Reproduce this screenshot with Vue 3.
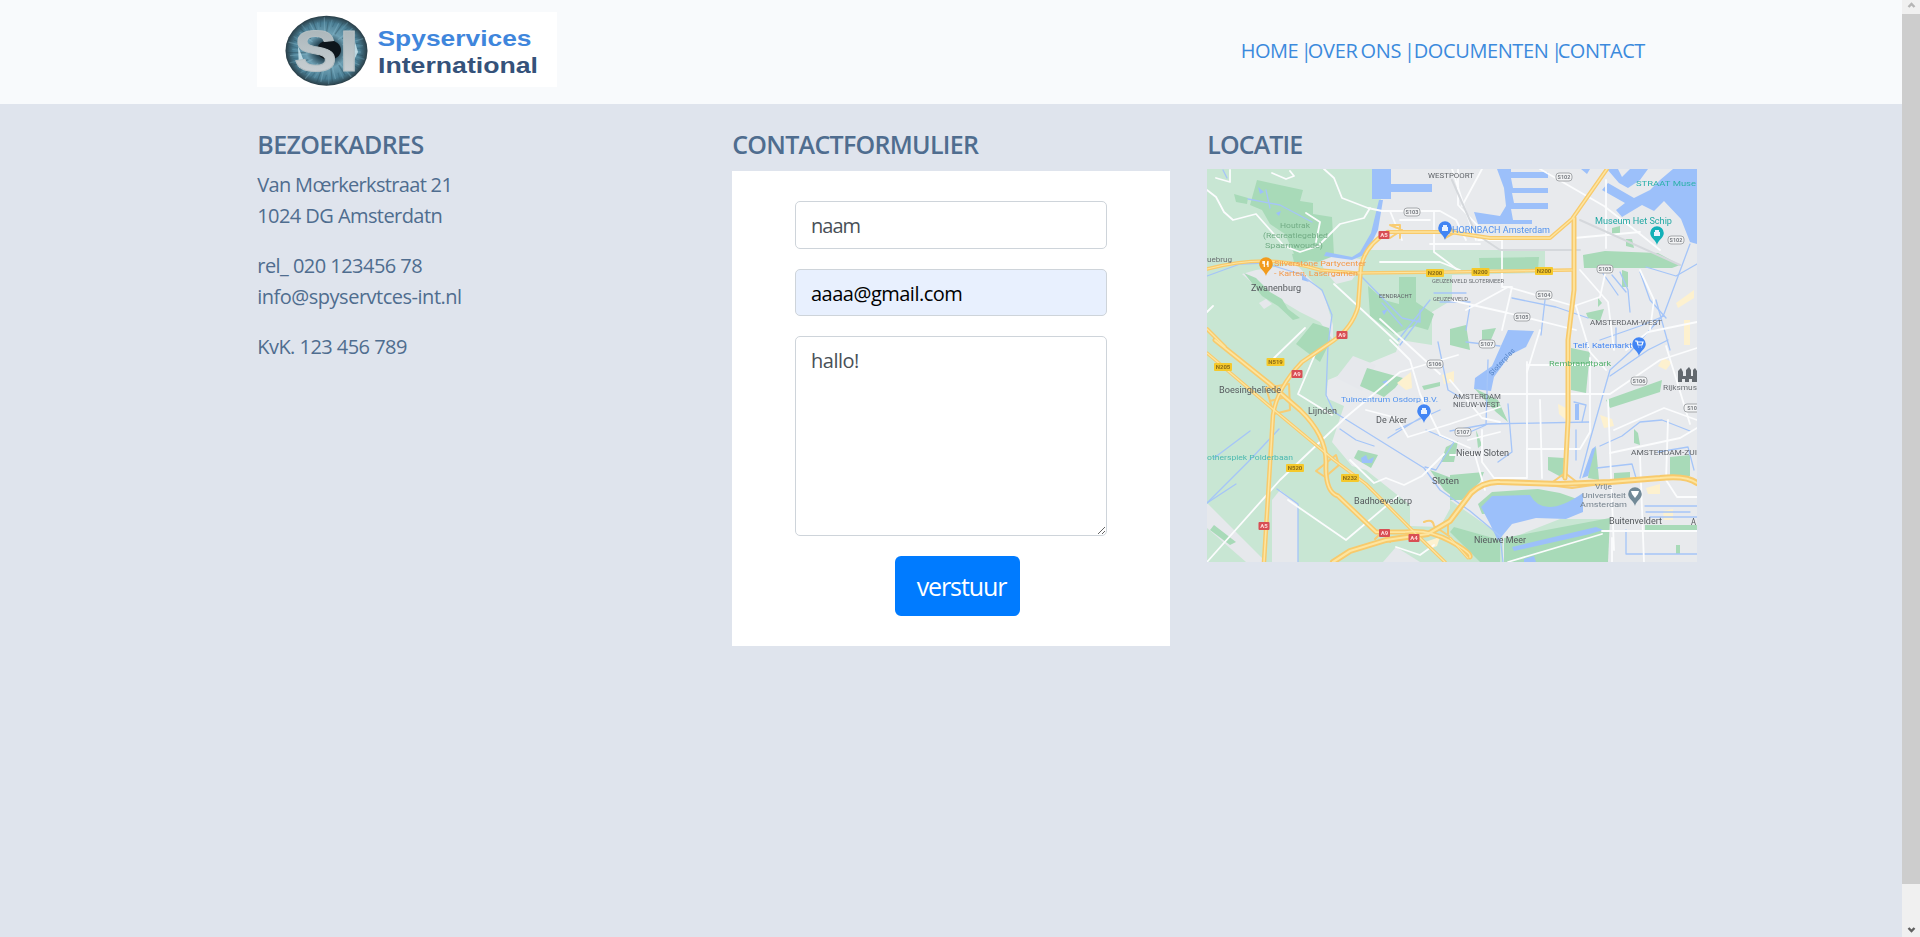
<script setup>
import { ref } from 'vue'

const naam = ref('naam')
const email = ref('aaaa@gmail.com')
const bericht = ref('hallo!')

const nav = [
  { label: 'HOME |', cls: 'n1' },
  { label: 'OVER ONS |', cls: 'n2' },
  { label: 'DOCUMENTEN |', cls: 'n3' },
  { label: 'CONTACT', cls: 'n4' },
]

const irisRays = Array.from({ length: 60 }, (_, i) => {
  const a = (i * Math.PI) / 30
  const inner = 0.42 + (i % 4) * 0.09
  const outer = 0.84 + (i % 3) * 0.06
  return {
    x1: 69.5 + Math.cos(a) * 41 * inner,
    y1: 38.7 + Math.sin(a) * 35 * inner,
    x2: 69.5 + Math.cos(a + 0.05) * 41 * outer,
    y2: 38.7 + Math.sin(a + 0.05) * 35 * outer,
    c: ['#8fc0d2', '#31596b', '#6fa5ba', '#24424f'][(i * 7) % 4],
  }
})

const light = [
  'M1207 169H1372L1374 199H1381L1372 236L1362 250H1545V273L1452 275V300L1432 312V345L1400 340L1396 352L1328 380L1326 398L1344 406L1338 424L1332 442L1352 466L1366 470L1410 505V526L1440 527L1452 505L1498 538L1500 562H1207Z',
  'M1504 541L1560 519H1608V562H1504Z',
  'M1450 500L1503 537V562H1450Z',
]
const grey = [
  'M1256 270L1296 264L1324 294L1333 325V340L1320 322L1300 312L1280 300L1260 290L1242 274Z',
  'M1259 303L1266 299L1272 304L1264 309Z',
  'M1318 252L1366 260L1352 280L1336 284L1324 270Z',
  'M1353 356L1376 365L1362 391L1336 378Z',
  'M1272 562V500L1280 490L1298 504V562Z',
  'M1207 503L1266 562H1246L1207 528Z',
  'M1383 562L1396 547L1420 562Z',
]
const dark = [
  'M1257 180L1303 190L1300 201L1313 203V214L1332 217L1334 256L1318 262L1296 258L1285 234L1270 224L1262 210L1250 205Z',
  'M1234 194L1248 198L1247 204L1236 202Z',
  'M1292 254L1308 251L1315 257L1306 262H1294Z',
  'M1368 286L1384 300L1399 304V277H1416V302L1434 314L1428 330L1414 326L1394 334L1370 316Z',
  'M1244 273L1256 278L1270 292L1282 299L1288 309L1300 318L1293 320L1278 306L1262 296Z',
  'M1313 323L1329 328L1330 342L1320 362L1296 344Z',
  'M1367 368L1403 378L1395 388L1384 397L1360 386Z',
  'M1358 450L1378 455L1371 468L1354 458Z',
  'M1479 258L1539 257L1538 270L1480 269Z',
  'M1583 255L1605 251L1658 253L1680 265L1672 268H1584Z',
  'M1612 228L1620 226V234H1612ZM1626 239H1632L1634 248L1626 246Z',
  'M1450 329L1466 325L1470 350L1450 345ZM1482 330L1496 328L1490 342H1482Z',
  'M1586 313L1604 309L1600 321L1588 318ZM1622 270L1628 272V287H1622ZM1598 298L1602 303L1598 307Z',
  'M1571 348L1590 352L1586 393L1571 390Z',
  'M1606 400L1662 380L1660 392L1610 408Z',
  'M1548 457L1564 458L1563 478L1548 470Z',
  'M1590 455L1596 447L1599 480L1588 478ZM1614 473L1630 472V479H1614Z',
  'M1670 457L1690 455V476H1670ZM1634 429L1638 433L1640 445L1634 443Z',
  'M1478 504L1492 492L1538 489L1560 493L1580 500L1578 510L1482 514Z',
  'M1450 475L1484 472L1480 482L1462 500H1450Z',
  'M1454 527L1500 540L1500 562H1480L1450 532Z',
  'M1504 538L1610 518L1608 562H1504Z',
  'M1446 447L1458 441L1454 462H1441ZM1430 470L1457 480L1452 496L1444 490Z',
  'M1645 525H1697V530H1645ZM1676 545H1680V554H1676Z',
  'M1214 525L1236 542L1230 545L1210 530Z',
  'M1474 388L1498 400L1508 422L1496 412ZM1476 430L1482 445L1478 448Z',
  'M1422 386L1440 382V386L1424 390Z',
]
const water = [
  'M1372 169H1391V184H1432V192H1391V199H1372Z',
  'M1497 169H1511V172H1548V178H1511L1513 188H1548V193H1512L1514 203H1548V209H1511L1513 220H1532V224H1478L1474 212L1500 216L1506 206L1504 188Z',
  'M1581 169H1590L1587 174ZM1607 169H1618L1622 177L1630 169H1648L1640 180L1628 188L1619 183Z',
  'M1602 190L1608 183L1634 198L1650 190L1660 180L1673 169H1697V244L1690 242L1681 219L1664 201L1654 211L1642 205L1622 217L1616 210L1625 203Z',
  'M1508 330L1534 331L1526 347L1510 355L1494 377L1491 391L1474 389L1475 378L1492 366Z',
  'M1481 507L1492 496L1530 495Q1544 520 1583 493V512L1566 519L1536 518L1512 524L1498 541L1490 524Z',
  'M1512 547L1596 527L1603 530L1590 534L1514 551Z',
  'M1360 252L1371 233L1379 200L1383 200L1378 230L1366 254L1352 260L1324 256L1326 252L1352 257Z',
  'M1592 449L1596 446L1588 476L1582 478ZM1575 404H1579V420H1575Z',
  'M1361 458L1366 455L1368 460L1374 457L1372 463L1362 463Z',
  'M1258 187L1264 192L1260 194ZM1276 213L1281 211L1279 216ZM1382 382L1387 380L1388 386ZM1382 311L1388 309L1384 315Z',
  'M1302 273L1309 282L1302 280ZM1524 559L1534 556L1536 562H1524Z',
]
const beige = [
  'M1397 383L1411 372L1412 388L1406 390Z',
  'M1442 375L1454 371V382L1444 384Z',
  'M1676 303L1694 290V298L1678 308ZM1684 320H1690V345H1684Z',
  'M1663 358L1672 362L1666 370L1658 366ZM1663 511L1673 509V520H1664Z',
  'M1425 542L1440 537L1437 546L1430 549ZM1646 488L1660 484V494H1648ZM1558 404L1566 408V420L1559 414Z',
  'M1600 415L1612 419L1614 426L1604 428Z',
]
const streams = [
  'M1207 276L1240 264L1264 263L1300 274L1322 290L1332 315L1328 345L1326 395L1334 412L1424 468L1440 490L1470 511L1500 536L1503 562',
  'M1248 199L1280 205L1312 222M1266 190L1270 208M1223 170L1227 178',
  'M1382 303L1402 326M1400 345L1420 318M1360 275L1402 318L1420 322V310',
  'M1690 244L1664 314L1630 352L1610 370L1590 440L1580 478',
  'M1620 272L1628 290L1630 312M1612 275L1626 292M1602 272L1618 295M1512 298L1556 307L1588 318M1545 300L1541 335',
  'M1610 376L1648 350L1668 340M1600 446L1622 436L1640 422L1662 420L1690 431',
  'M1450 431L1488 424L1590 422M1488 360L1486 425L1470 432',
  'M1574 402L1586 405L1582 422M1576 430V460M1597 468L1632 464L1636 478',
  'M1438 342L1448 390L1460 397M1426 430L1454 442L1436 470L1425 467M1340 429L1356 440L1374 446',
  'M1626 530V554H1697M1645 506H1697M1646 512H1690M1650 517H1697',
  'M1207 503L1248 462L1279 429M1277 489L1298 504V562',
  'M1508 404L1512 452L1498 462M1466 342L1500 346M1658 452L1688 447L1694 470M1640 272L1650 300L1666 318',
  'M1646 267L1676 276L1697 264M1656 300L1670 350M1600 340L1640 326L1664 316M1616 347V328',
  'M1207 503L1236 484M1214 458L1250 431M1388 438L1420 418M1396 430L1440 410',
  'M1470 306L1466 330M1434 293H1466M1440 302H1470M1430 300L1398 340',
]
const minor = [
  'M1324 169L1334 178L1342 198L1368 208L1382 211H1440L1456 220L1466 240',
  'M1207 190L1216 197L1224 212L1233 220L1256 214L1272 232L1284 246L1300 252L1318 246L1340 224L1364 218L1370 208',
  'M1290 171L1294 176L1286 179L1272 173M1230 170V182L1216 178M1306 213L1320 222L1316 242',
  'M1334 284L1398 343M1380 319L1440 374M1207 562L1280 480L1345 418L1400 372L1458 355',
  'M1305 328L1274 358M1316 352L1298 394L1332 415M1366 410L1397 418L1408 437L1450 424L1500 407',
  'M1390 340L1410 360L1420 394L1440 435L1470 448M1350 460L1374 483L1386 478L1404 485L1422 476L1444 454',
  'M1288 500L1346 540L1398 496M1396 547L1420 555L1434 545M1207 312L1213 306',
  'M1434 211V252L1450 264L1460 272M1502 240V287L1512 287L1502 330M1450 300L1508 313L1576 330',
  'M1466 310L1508 287L1574 306L1600 297L1606 270M1574 238L1640 232M1606 180V248',
  'M1500 394H1610L1660 360L1697 348M1527 362V478H1494L1482 462V430',
  'M1450 380L1482 418L1500 422M1527 449H1580L1590 432V358M1608 400L1614 550',
  'M1540 169L1604 206L1640 234L1660 250M1452 169L1464 206L1476 240',
  'M1458 169V205L1480 228M1482 169L1462 206M1502 240H1478M1430 244H1480M1430 220H1400',
  'M1580 270L1608 302L1614 350M1614 430L1664 408L1697 420M1610 453L1680 438L1697 428M1640 456L1644 562',
  'M1668 420L1666 480L1677 497H1697M1602 531H1697M1508 562L1602 534M1576 306L1590 352L1606 370',
  'M1666 346L1690 424M1640 270L1654 300L1650 330M1527 372L1540 330M1527 365H1600',
  'M1612 538V562M1626 350L1648 332L1697 322M1540 400L1542 478M1468 440L1500 432',
  'M1450 455H1475L1485 490M1380 262H1440L1460 270M1390 211L1402 240',
]
const majors = [
  { d: 'M1207 269Q1238 261 1264 261T1320 270L1356 273L1450 272L1572 270', w: 3.5 },
  { d: 'M1388 232H1450L1490 238H1550L1572 219L1607 169', w: 4 },
  { d: 'M1574 218V290L1568 340V420L1565 478', w: 5 },
  { d: 'M1388 232Q1365 245 1361 267L1358 307Q1352 328 1333 341L1302 362Q1277 388 1273 415L1264 562', w: 4.5 },
  { d: 'M1215 340L1270 384L1300 410Q1327 436 1326 464T1338 496L1376 532L1405 532Q1428 529 1450 541T1470 557', w: 5 },
  { d: 'M1207 353L1274 410L1334 460L1366 484L1415 533L1445 562', w: 3.4 },
  { d: 'M1333 562L1350 551L1386 540L1428 534L1450 521L1471 493Q1484 481 1500 482L1560 484L1610 482L1660 478Q1686 475 1697 483', w: 6 },
  { d: 'M1207 329L1225 347', w: 4 },
  { d: 'M1450 538L1468 558', w: 3 },
]
const loops = [
  'M1266 388L1289 384L1290 410L1274 414ZM1270 401L1286 397',
  'M1316 471L1336 455L1339 465L1325 477Z',
  'M1424 522Q1433 518 1434 526L1449 536M1448 534V522L1432 530M1550 484L1565 473L1582 486M1540 484L1572 488L1600 484',
  'M1390 225L1402 230L1390 238M1392 225H1400V238M1445 225L1456 232L1445 238',
  'M1375 539L1382 532L1390 542',
]
const badges = [
  { x: 1384, y: 235, t: 'A5', c: 'r' }, { x: 1342, y: 335, t: 'A9', c: 'r' },
  { x: 1297, y: 374, t: 'A9', c: 'r' }, { x: 1264, y: 526, t: 'A5', c: 'r' },
  { x: 1384.5, y: 533, t: 'A9', c: 'r' }, { x: 1414, y: 538, t: 'A4', c: 'r' },
  { x: 1435, y: 273, t: 'N200', c: 'y' }, { x: 1480.5, y: 272, t: 'N200', c: 'y' },
  { x: 1544, y: 271, t: 'N200', c: 'y' }, { x: 1223, y: 367, t: 'N205', c: 'y' },
  { x: 1275.5, y: 362, t: 'N519', c: 'y' }, { x: 1295, y: 468, t: 'N520', c: 'y' },
  { x: 1350, y: 478, t: 'N232', c: 'y' },
  { x: 1412, y: 212, t: 'S103', c: 'w' }, { x: 1564, y: 177, t: 'S102', c: 'w' },
  { x: 1676, y: 240, t: 'S102', c: 'w' }, { x: 1605, y: 269, t: 'S103', c: 'w' },
  { x: 1544, y: 295, t: 'S104', c: 'w' }, { x: 1522, y: 317, t: 'S105', c: 'w' },
  { x: 1487, y: 344, t: 'S107', c: 'w' }, { x: 1435, y: 364, t: 'S106', c: 'w' },
  { x: 1463, y: 432, t: 'S107', c: 'w' }, { x: 1639, y: 381, t: 'S106', c: 'w' },
  { x: 1692, y: 408, t: 'S10', c: 'w' },
]
const labels = [
  { x: 1428, y: 178, w: 46, s: 6.5, t: 'WESTPOORT', c: '#5f6368' },
  { x: 1636, y: 186, w: 60, s: 8, t: 'STRAAT Muse', c: '#2eb1ac' },
  { x: 1595, y: 224, w: 77, s: 8.5, t: 'Museum Het Schip', c: '#25a9a4' },
  { x: 1452, y: 233, w: 98, s: 9, t: 'HORNBACH Amsterdam', c: '#5292ee' },
  { x: 1280, y: 228, w: 30, s: 8, t: 'Houtrak', c: '#73ad86' },
  { x: 1263, y: 238, w: 65, s: 8, t: '(Recreatiegebied', c: '#73ad86' },
  { x: 1265, y: 248, w: 58, s: 8, t: 'Spaarnwoude)', c: '#73ad86' },
  { x: 1274, y: 266, w: 92, s: 8, t: 'Silverstone Partycenter', c: '#f49a4b' },
  { x: 1274, y: 276, w: 84, s: 8, t: '- Karten, Lasergamen', c: '#f49a4b' },
  { x: 1207, y: 262, w: 25, s: 8, t: 'uebrug', c: '#6a6e72' },
  { x: 1251, y: 291, w: 50, s: 8.5, t: 'Zwanenburg', c: '#55595d' },
  { x: 1379, y: 298, w: 33, s: 5, t: 'EENDRACHT', c: '#5f6368' },
  { x: 1432, y: 283, w: 72, s: 5, t: 'GEUZENVELD SLOTERMEER', c: '#6b6f74' },
  { x: 1433, y: 301, w: 35, s: 5, t: 'GEUZENVELD', c: '#6b6f74' },
  { x: 1590, y: 325, w: 72, s: 7, t: 'AMSTERDAM-WEST', c: '#5f6368' },
  { x: 1573, y: 348, w: 59, s: 8, t: 'Telf. Katemarkt', c: '#4285f4' },
  { x: 1549, y: 366, w: 62, s: 8, t: 'Rembrandtpark', c: '#54b06d' },
  { x: 1453, y: 399, w: 48, s: 7, t: 'AMSTERDAM', c: '#5f6368' },
  { x: 1453, y: 407, w: 47, s: 7, t: 'NIEUW-WEST', c: '#5f6368' },
  { x: 1663, y: 390, w: 34, s: 8, t: 'Rijksmus', c: '#6d7176' },
  { x: 1219, y: 393, w: 62, s: 8.5, t: 'Boesinghelïede', c: '#55595d' },
  { x: 1308, y: 414, w: 29, s: 8.5, t: 'Lijnden', c: '#55595d' },
  { x: 1341, y: 402, w: 97, s: 8, t: 'Tuincentrum Osdorp B.V.', c: '#5595f0' },
  { x: 1376, y: 423, w: 31, s: 8.5, t: 'De Aker', c: '#55595d' },
  { x: 1207, y: 460, w: 86, s: 8, t: 'otherspiek Polderbaan', c: '#4cb9b0' },
  { x: 1432, y: 484, w: 27, s: 8.5, t: 'Sloten', c: '#55595d' },
  { x: 1354, y: 504, w: 58, s: 8.5, t: 'Badhoevedorp', c: '#55595d' },
  { x: 1456, y: 456, w: 53, s: 8.5, t: 'Nieuw Sloten', c: '#55595d' },
  { x: 1474, y: 543, w: 52, s: 8.5, t: 'Nieuwe Meer', c: '#55595d' },
  { x: 1631, y: 455, w: 66, s: 7, t: 'AMSTERDAM-ZUI', c: '#5f6368' },
  { x: 1595, y: 489, w: 17, s: 8, t: 'Vrije', c: '#76838e' },
  { x: 1582, y: 498, w: 44, s: 8, t: 'Universiteit', c: '#76838e' },
  { x: 1580, y: 507, w: 47, s: 8, t: 'Amsterdam', c: '#76838e' },
  { x: 1609, y: 524, w: 53, s: 8.5, t: 'Buitenveldert', c: '#55595d' },
  { x: 1691, y: 525, w: 5, s: 8.5, t: 'A', c: '#55595d' },
]
const pins = [
  { x: 1266, y: 264, c: '#f29b1d' },
  { x: 1445, y: 228, c: '#4285f4' },
  { x: 1657, y: 233, c: '#12b0b8' },
  { x: 1639, y: 344, c: '#4285f4' },
  { x: 1424, y: 411, c: '#4285f4' },
  { x: 1635, y: 494, c: '#718997' },
]
</script>

<template>
  <div class="screen">
    <div class="page">
      <header class="top">
        <div class="container bar">
          <svg class="logo" viewBox="0 0 300 75">
            <defs>
              <radialGradient id="iris">
                <stop offset="0" stop-color="#101c24" />
                <stop offset=".28" stop-color="#2c4c5b" />
                <stop offset=".5" stop-color="#6d9fb3" />
                <stop offset=".8" stop-color="#4b7f95" />
                <stop offset="1" stop-color="#283c45" />
              </radialGradient>
              <linearGradient id="silver" x1="0" y1="0" x2="0" y2="1">
                <stop offset="0" stop-color="#a3b0b5" />
                <stop offset="1" stop-color="#cfd5d8" />
              </linearGradient>
            </defs>
            <rect width="300" height="75" fill="#fff" />
            <g class="eye">
              <ellipse cx="69.5" cy="38.7" rx="41" ry="35" fill="url(#iris)" />
              <line v-for="(r, i) in irisRays" :key="i" :x1="r.x1" :y1="r.y1" :x2="r.x2" :y2="r.y2" :stroke="r.c" stroke-width="1.2" opacity=".35" />
              <path d="M41 34L48 52L42 56ZM98 30L101 40L96 50Z" fill="#d6edf5" opacity=".8" />
              <ellipse cx="72" cy="38" rx="12" ry="10" fill="#0d151b" />
              <text class="mono" x="37" y="59" textLength="43" lengthAdjust="spacingAndGlyphs" fill="url(#silver)">S</text>
              <text class="mono" x="82" y="59" textLength="20" lengthAdjust="spacingAndGlyphs" fill="url(#silver)">I</text>
            </g>
            <text class="brand" x="120.5" y="34" textLength="154" lengthAdjust="spacingAndGlyphs" fill="#3f86dc">Spyservices</text>
            <text class="brand" x="121" y="61" textLength="160" lengthAdjust="spacingAndGlyphs" fill="#35527a">International</text>
          </svg>
          <nav>
            <a v-for="n in nav" :key="n.label" :class="n.cls">{{ n.label }}</a>
          </nav>
        </div>
      </header>

      <main class="container cols">
        <section>
          <h2 class="h-a">BEZOEKADRES</h2>
          <p><span class="l1">Van Mœrkerkstraat 21</span><br /><span class="l2">1024 DG Amsterdatn</span></p>
          <p><span class="l3">rel_ 020 123456 78</span><br /><span class="l4">info@spyservtces-int.nl</span></p>
          <p><span class="l5">KvK. 123 456 789</span></p>
        </section>
        <section>
          <h2 class="h-b">CONTACTFORMULIER</h2>
          <form @submit.prevent>
            <input v-model="naam" class="field name" type="text" />
            <input v-model="email" class="field filled" type="text" />
            <textarea v-model="bericht" class="field area"></textarea>
            <button type="submit">verstuur</button>
          </form>
        </section>
        <section>
          <h2 class="h-c">LOCATIE</h2>
          <svg class="map" viewBox="1207 169 490 393">
            <rect x="1207" y="169" width="490" height="393" fill="#e8eaed" />
            <g class="soft">
              <path v-for="d in light" :key="d" :d="d" fill="#c8e6d3" />
              <path v-for="d in grey" :key="d" :d="d" fill="#e6e8ec" />
              <path v-for="d in dark" :key="d" :d="d" fill="#a8dab8" />
              <path v-for="d in beige" :key="d" :d="d" fill="#fdf1cf" />
              <path v-for="d in water" :key="d" :d="d" fill="#9cc0fa" />
              <path v-for="d in streams" :key="d" :d="d" class="line" stroke="#a5c5f8" stroke-width="1.3" />
              <path v-for="d in minor" :key="d" :d="d" class="line" stroke="#fbfcfd" stroke-width="1.8" />
              <path d="M1452 180L1476 234L1500 250H1580M1580 220L1680 265" class="line" stroke="#d5d8dc" stroke-width="2" />
              <path v-for="d in loops" :key="d" :d="d" class="line" stroke="#f8cc73" stroke-width="2" />
              <path v-for="m in majors" :key="m.d" :d="m.d" class="line" stroke="#f8ca6c" :stroke-width="m.w" />
              <path v-for="m in majors" :key="'c' + m.d" :d="m.d" class="line" stroke="#fde5a0" :stroke-width="m.w * 0.35" />
              <g v-for="(b, i) in badges" :key="i" :class="['badge', b.c]">
                <rect :x="b.x - (b.c === 'y' ? 9 : b.c === 'w' ? 8 : 5.5)" :y="b.y - 4" :width="b.c === 'y' ? 18 : b.c === 'w' ? 16 : 11" height="8" :rx="b.c === 'w' ? 3 : 1" />
                <text :x="b.x" :y="b.y + 2.3" text-anchor="middle">{{ b.t }}</text>
              </g>
              <text v-for="(l, i) in labels" :key="i" class="label" :x="l.x" :y="l.y" :font-size="l.s" :textLength="l.w" lengthAdjust="spacingAndGlyphs" :fill="l.c">{{ l.t }}</text>
              <text class="label" x="1492" y="376" font-size="7" fill="#4f7fc0" transform="rotate(-47 1492 376)" textLength="34">Sloterplas</text>
              <path d="M1678 382V371L1681 368L1683 372V376H1686V370L1689 367L1691 370V376H1693V370L1695 368L1697 371V382H1692V379H1689V382H1685V379H1682V382Z" fill="#62686e" />
              <g v-for="p in pins" :key="p.x" :transform="`translate(${p.x} ${p.y})`">
                <path d="M0 12C-1 7-6.8 5-6.8 0A6.8 6.8 0 0 1 6.8 0C6.8 5 1 7 0 12Z" :fill="p.c" />
                <path v-if="p.x === 1639" d="M-4-3H-2L-1 1H3L4-2H-2M-.5 3h.6M2 3h.6" fill="none" stroke="#fff" stroke-width="1.2" />
                <path v-else-if="p.x === 1266" d="M-3-3V0M-1.7-3V3M2-3V3M2-3L1 1" fill="none" stroke="#fff" stroke-width="1.2" />
                <path v-else-if="p.x === 1635" d="M-4-3H4L3 0L0 4L-3 0Z" fill="#fff" />
                <path v-else d="M-3-1H-2V-3H2V-1H3V3H-3Z" fill="#e9f2ff" />
              </g>
            </g>
          </svg>
        </section>
      </main>
    </div>

    <aside class="scroll">
      <svg class="arrow up" viewBox="0 0 18 14"><path d="M6.5 7L9.5 4L12.5 7" /></svg>
      <div class="thumb"></div>
      <svg class="arrow down" viewBox="0 0 18 14"><path d="M6.5 5L9.5 8L12.5 5" /></svg>
    </aside>
  </div>
</template>

<style>
html, body { margin: 0; overflow: hidden; }
</style>

<style scoped>
* { box-sizing: border-box; }
.screen { display: flex; width: 1920px; height: 937px; overflow: hidden; font-family: "Open Sans", "Noto Sans", sans-serif; font-size: 20px; color: #4f6d8f; }
.page { width: 1902px; background: #dfe4ed; }
.container { width: 1425px; margin: 0 auto; padding: 0 18.75px; }
.top { height: 104px; background: #f8fafc; }
.bar { display: flex; justify-content: space-between; align-items: flex-start; padding-top: 12px; }
.logo { display: block; width: 300px; height: 75px; }
.eye { filter: blur(.5px); }
.mono { font: bold 58px "Liberation Sans", sans-serif; stroke: #b4bfc3; stroke-width: 1; }
.brand { font: bold 22px "Liberation Sans", sans-serif; }
nav { display: flex; margin: 24px -1px 0 0; width: 405px; line-height: 30px; color: #3c8add; white-space: nowrap; word-spacing: -2px; }
nav a { flex: none; white-space: pre; }
.n1 { width: 67px; letter-spacing: -.5px; }
.n2 { width: 106px; letter-spacing: -.3px; }
.n3 { width: 144px; letter-spacing: -.4px; }
.n4 { width: 88px; letter-spacing: -.5px; }
.cols { display: grid; grid-template-columns: repeat(3, 437.5px); column-gap: 37.5px; padding-top: 25px; }
section { min-width: 0; }
h2 { margin: 0 0 10px; font-size: 25px; font-weight: 600; line-height: 30px; white-space: nowrap; }
.h-a { letter-spacing: -.6px; }
.h-b { letter-spacing: -.72px; }
.h-c { letter-spacing: -.9px; }
p { margin: 0 0 19px; line-height: 31px; white-space: nowrap; }
.l1 { letter-spacing: -.67px; }
.l2 { letter-spacing: -.57px; }
.l3, .l5 { letter-spacing: -.54px; }
.l4 { letter-spacing: -.49px; }
form { display: flex; flex-direction: column; align-items: center; gap: 20px; margin-top: 12px; height: 475px; padding-top: 30px; background: #fff; }
.field { display: block; width: 312px; height: 47.5px; margin: 0; padding: 2px 15px 0; border: 1px solid #ced4da; border-radius: 5px; background: #fff; font: inherit; letter-spacing: -.5px; color: #495057; outline: 0; }
.name { letter-spacing: -1px; }
.filled { background: #e8f0fe; color: #000; }
.area { height: 200px; padding: 9px 15px; line-height: 30px; resize: both; }
button { width: 125px; height: 60px; margin-left: 13px; padding: 0 0 0 8px; border: 0; border-radius: 6px; background: #007bff; color: #fff; font: 25px "Open Sans", "Noto Sans", sans-serif; letter-spacing: -1.1px; }
.map { display: block; width: 490px; height: 393px; }
.soft { filter: blur(.7px); }
.line { fill: none; stroke-linejoin: round; stroke-linecap: round; }
.label { font-family: Roboto, sans-serif; }
.badge text { font: bold 6px Roboto, sans-serif; fill: #8b6c18; }
.badge.r rect { fill: #d84e54; }
.badge.r text { fill: #ffdada; }
.badge.y rect { fill: #f5c92c; }
.badge.w rect { fill: #f3f4f5; stroke: #a5a8ab; stroke-width: 1; }
.badge.w text { font-size: 5.5px; fill: #777b80; }
.scroll { display: flex; flex-direction: column; width: 18px; background: #f0f0f0; }
.thumb { height: 870px; margin-bottom: auto; background: #cdcdcd; }
.arrow { display: block; width: 18px; height: 14px; fill: none; stroke-width: 2.4; }
.up { stroke: #b5b5b5; }
.down { stroke: #606060; }
</style>
